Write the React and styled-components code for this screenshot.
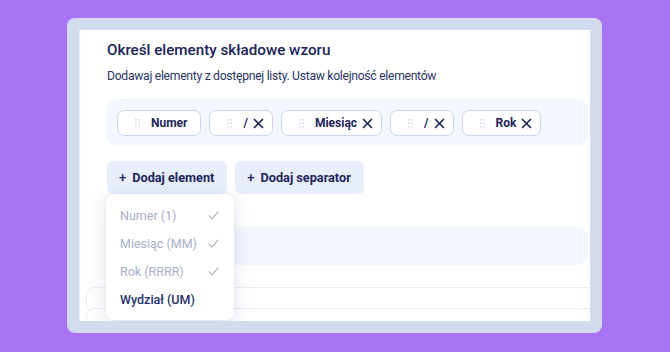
import React from "react";
import styled, { createGlobalStyle } from "styled-components";

const GlobalStyle = createGlobalStyle`
  html, body {
    margin: 0;
    padding: 0;
    background: #a973f5;
    font-family: Roboto, "Noto Sans", sans-serif;
  }
  * { box-sizing: border-box; }
`;

const Page = styled.div`
  width: 670px;
  height: 352px;
  padding: 18px 68px 19px 67px;
`;

const Frame = styled.div`
  height: 315px;
  background: #d3dcee;
  border-radius: 8px;
  padding: 12px;
`;

const Panel = styled.div`
  height: 291px;
  background: #fff;
  overflow: hidden;
  padding: 10px 0 0 6px;
  border-left: 1px solid #e9eef8;
`;

const Section = styled.div`
  padding-left: 21px;
  padding-right: 2px;
`;

const Title = styled.h2`
  margin: 0;
  font-size: 15.2px;
  line-height: 20px;
  font-weight: 500;
  color: #1d245a;
`;

const Subtitle = styled.p`
  margin: 7px 0 0;
  font-size: 12.2px;
  letter-spacing: -0.3px;
  line-height: 18px;
  color: #2c3568;
`;

const ChipTray = styled.div`
  margin-top: 14px;
  display: flex;
  gap: 8px;
  background: #f3f7fe;
  border-radius: 10px;
  padding: 11px 10px 10px;
`;

const Chip = styled.div`
  height: 26px;
  display: flex;
  align-items: center;
  background: #fff;
  border: 1px solid #c9d5ea;
  border-radius: 7px;
  padding: 0 ${(p) => (p.$removable ? 8 : 13)}px 0 17px;
  font-size: 12px;
  font-weight: 700;
  color: #1d245a;
`;

const ChipLabel = styled.span`
  margin-left: 11px;
  margin-right: ${(p) => (p.$removable ? 5 : 0)}px;
`;

const Actions = styled.div`
  margin-top: 15px;
  display: flex;
  gap: 8px;
`;

const ButtonWrap = styled.div`
  position: relative;
`;

const AddButton = styled.button`
  height: 33px;
  display: flex;
  align-items: center;
  gap: 6px;
  border: none;
  background: #e8eefb;
  border-radius: 6px;
  padding: 0 13px 0 12px;
  font-family: inherit;
  font-size: 12.7px;
  font-weight: 700;
  color: #1d245a;
`;

const Plus = styled.span`
  font-size: 13px;
  font-weight: 500;
`;

const Menu = styled.ul`
  position: absolute;
  z-index: 2;
  top: 100%;
  left: -1px;
  width: 128px;
  margin: 0;
  padding: 7px 0;
  list-style: none;
  background: #fff;
  border-radius: 7px;
  box-shadow: 0 4px 18px rgba(40, 60, 120, 0.14), 0 0 2px rgba(40, 60, 120, 0.08);
`;

const MenuItem = styled.li`
  height: 28px;
  display: flex;
  align-items: center;
  justify-content: space-between;
  padding: 0 15px 0 14px;
  font-size: 12.5px;
  font-weight: ${(p) => (p.$used ? 400 : 500)};
  color: ${(p) => (p.$used ? "#a9afc9" : "#26306a")};
`;

const Band = styled.div`
  margin-top: 33px;
  height: 38px;
  background: #f3f7fe;
  border-radius: 10px;
`;

const Rows = styled.div`
  margin-top: 22px;
`;

const Row = styled.div`
  height: ${(p) => p.$h}px;
  border: 1px solid #e7edf8;
  border-right: none;
  border-bottom: none;
  border-radius: 8px 0 0 0;
`;

function Grip() {
  return (
    <svg width="5" height="9" viewBox="0 0 5 9" fill="#cdd3e1">
      {[0, 3.5, 7].map((y) =>
        [0, 3.5].map((x) => <rect key={`${x}-${y}`} x={x} y={y} width="1.6" height="1.6" rx="0.5" />)
      )}
    </svg>
  );
}

function Cross() {
  return (
    <svg width="11" height="11" viewBox="0 0 11 11" fill="none" stroke="#1d245a" strokeWidth="1.7" strokeLinecap="round">
      <path d="M1.5 1.5l8 8M9.5 1.5l-8 8" />
    </svg>
  );
}

function Check() {
  return (
    <svg width="11" height="9" viewBox="0 0 11 9" fill="none" stroke="#a9afc9" strokeWidth="1.2" strokeLinecap="round" strokeLinejoin="round">
      <path d="M1 4.8l3 3L10 1.2" />
    </svg>
  );
}

const chips = [
  { label: "Numer", removable: false },
  { label: "/", removable: true },
  { label: "Miesiąc", removable: true },
  { label: "/", removable: true },
  { label: "Rok", removable: true },
];

const options = [
  { label: "Numer (1)", used: true },
  { label: "Miesiąc (MM)", used: true },
  { label: "Rok (RRRR)", used: true },
  { label: "Wydział (UM)", used: false },
];

export default function App() {
  return (
    <>
      <GlobalStyle />
      <Page>
        <Frame>
          <Panel>
            <Section>
              <Title>Określ elementy składowe wzoru</Title>
              <Subtitle>Dodawaj elementy z dostępnej listy. Ustaw kolejność elementów</Subtitle>
              <ChipTray>
                {chips.map((c, i) => (
                  <Chip key={i} $removable={c.removable}>
                    <Grip />
                    <ChipLabel $removable={c.removable}>{c.label}</ChipLabel>
                    {c.removable && <Cross />}
                  </Chip>
                ))}
              </ChipTray>
              <Actions>
                <ButtonWrap>
                  <AddButton>
                    <Plus>+</Plus>Dodaj element
                  </AddButton>
                  <Menu>
                    {options.map((o) => (
                      <MenuItem key={o.label} $used={o.used}>
                        {o.label}
                        {o.used && <Check />}
                      </MenuItem>
                    ))}
                  </Menu>
                </ButtonWrap>
                <ButtonWrap>
                  <AddButton>
                    <Plus>+</Plus>Dodaj separator
                  </AddButton>
                </ButtonWrap>
              </Actions>
              <Band />
            </Section>
            <Rows>
              <Row $h={21} />
              <Row $h={40} />
            </Rows>
          </Panel>
        </Frame>
      </Page>
    </>
  );
}
